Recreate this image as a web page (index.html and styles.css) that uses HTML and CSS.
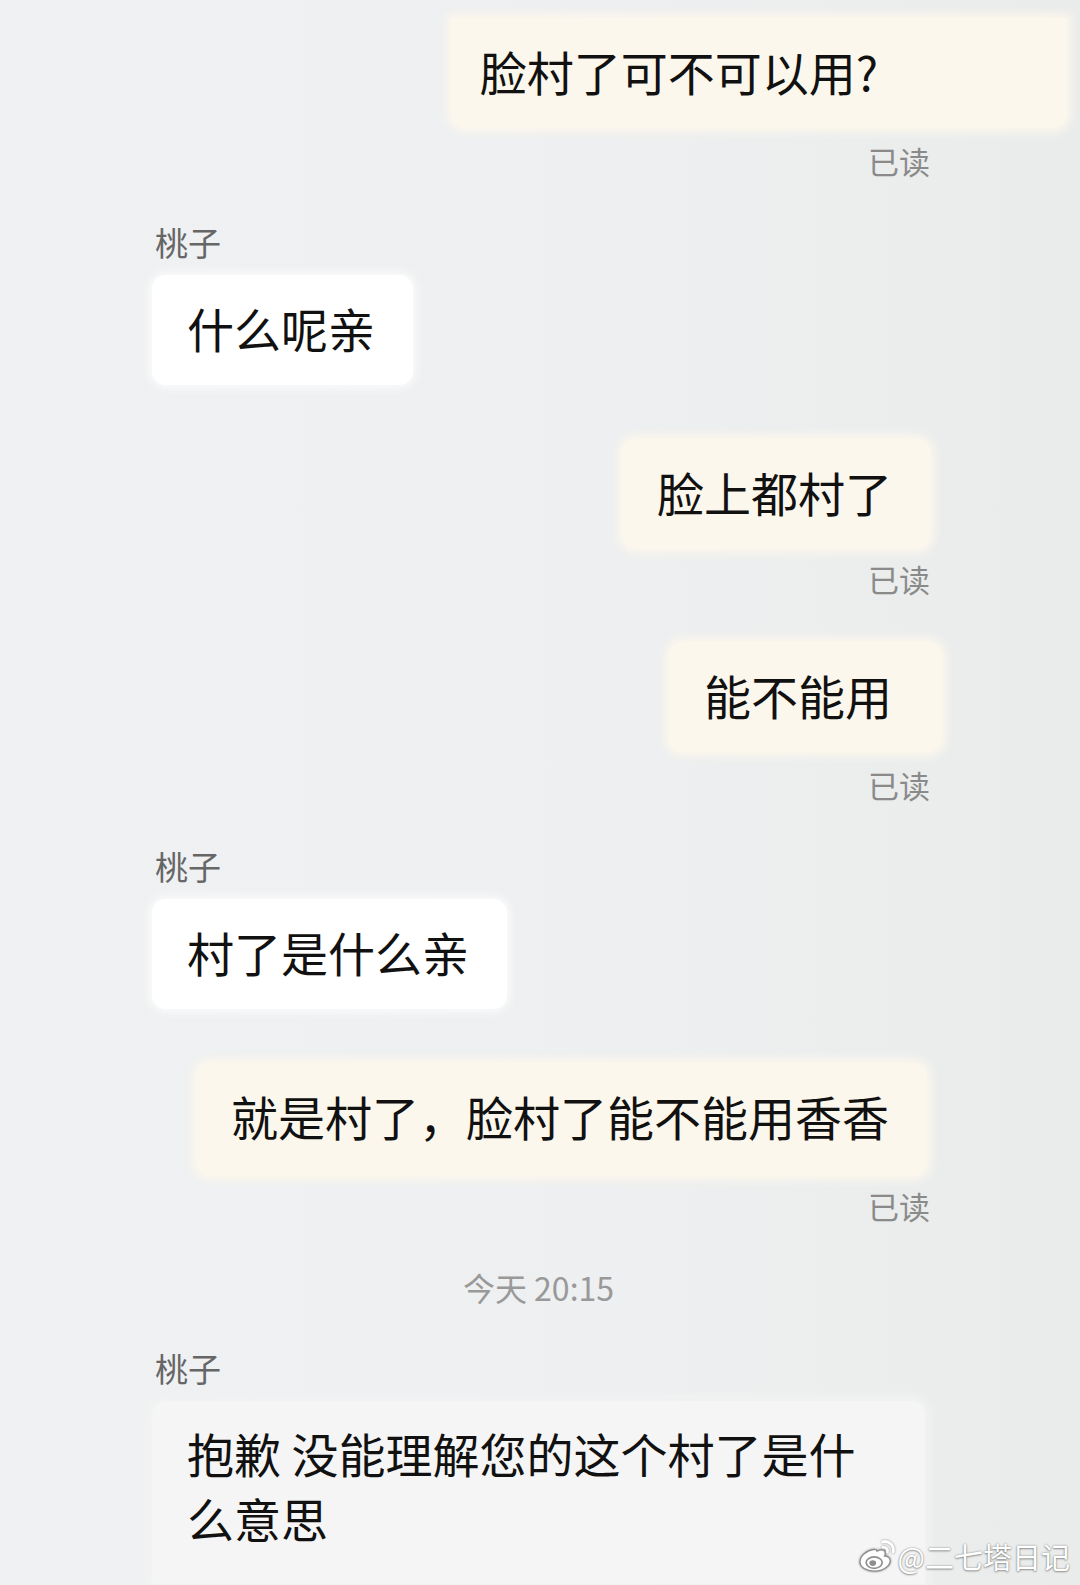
FILE: index.html
```html
<!DOCTYPE html>
<html lang="zh-CN">
<head>
  <meta charset="UTF-8">
  <meta name="viewport" content="width=device-width, initial-scale=1.0">
  <title>桃子</title>
  <link rel="stylesheet" href="styles.css">
</head>
<body>
  <div class="chat">
    <div class="row out"><div class="bubble cream first">脸村了可不可以用?</div></div>
    <div class="read gap-s">已读</div>

    <div class="name gap-l">桃子</div>
    <div class="row in gap-s"><div class="bubble white">什么呢亲</div></div>

    <div class="row out gap-xl"><div class="bubble cream">脸上都村了</div></div>
    <div class="read gap-xs">已读</div>

    <div class="row out gap-l"><div class="bubble cream wider">能不能用</div></div>
    <div class="read gap-s">已读</div>

    <div class="name gap-l">桃子</div>
    <div class="row in gap-s"><div class="bubble white">村了是什么亲</div></div>

    <div class="row out gap-xl"><div class="bubble cream tall">就是村了，脸村了能不能用香香</div></div>
    <div class="read gap-xs">已读</div>

    <div class="time gap-l">今天 20:15</div>

    <div class="name gap-l">桃子</div>
    <div class="row in gap-s"><div class="bubble grey long">抱歉 没能理解您的这个村了是什么意思</div></div>
  </div>

  <div class="watermark">
    <svg class="weibo" viewBox="0 0 40 36" width="38" height="34">
      <path d="M17 11c-8 1-15 7-15 13 0 6 7 10 15 10 10 0 17-6 17-11 0-3-3-5-6-5 1-2 1-5-1-6-2-1-5 0-7 1 0-2-1-2-3-2z" fill="#fff" stroke="#8f8f8f" stroke-width="1.4"/>
      <ellipse cx="17" cy="25" rx="8.5" ry="6" fill="#fff" stroke="#8f8f8f" stroke-width="1.8"/>
      <ellipse cx="15.5" cy="25.5" rx="3.6" ry="3" fill="#8f8f8f"/>
      <path d="M26 3a9 9 0 0 1 11 11" fill="none" stroke="#fff" stroke-width="3" stroke-linecap="round"/>
      <path d="M26 9a4 4 0 0 1 5 5" fill="none" stroke="#fff" stroke-width="2.6" stroke-linecap="round"/>
    </svg>
    <span>@二七塔日记</span>
  </div>
</body>
</html>
```

FILE: styles.css
```css
body {
  margin: 0;
  height: 1585px;
  overflow: hidden;
  position: relative;
  font-family: "Noto Sans CJK SC", "Noto Sans", sans-serif;
  background: linear-gradient(90deg, #eff1f2 0%, #edeff0 60%, #eaeceb 100%);
  color: #111;
}
.chat {
  display: flex;
  flex-direction: column;
  width: 778px;
  padding: 18px 0 0 152px;
}
.row {
  display: flex;
}
.row.out {
  justify-content: flex-end;
}
.row.in {
  justify-content: flex-start;
}
.bubble {
  font-size: 47px;
  line-height: 56px;
  padding: 25px 38px 29px 35px;
  border-radius: 14px;
  white-space: nowrap;
}
.bubble.cream {
  background: #fcf7ec;
  box-shadow: 0 0 10px 4px #fcf7ec;
}
.bubble.white {
  background: #ffffff;
  box-shadow: 0 0 8px 3px #fbfbfb;
}
.bubble.grey {
  background: #f5f5f5;
  box-shadow: 0 0 10px 4px #f3f3f3;
}
.bubble.first {
  padding-left: 29px;
  padding-right: 189px;
  margin-right: -137px;
  border-radius: 0 0 14px 14px;
}
.bubble.wider {
  padding-right: 50px;
  margin-right: -12px;
}
.bubble.tall {
  padding-top: 25px;
  padding-bottom: 32px;
  margin-right: 3px;
}
.bubble.long {
  white-space: normal;
  width: 690px;
  padding: 19px 48px 34px 35px;
  line-height: 65px;
  border-radius: 14px 14px 0 0;
}
.read {
  align-self: flex-end;
  font-size: 31px;
  line-height: 36px;
  color: #8a8a8a;
}
.name {
  font-size: 33px;
  line-height: 36px;
  color: #666;
  padding-left: 3px;
}
.time {
  align-self: center;
  margin-left: -5px;
  font-size: 32px;
  line-height: 36px;
  color: #999;
}
.gap-xs { margin-top: 12px; }
.gap-s { margin-top: 15px; }
.gap-l { margin-top: 45px; }
.gap-xl { margin-top: 54px; }
.watermark {
  position: absolute;
  right: 10px;
  bottom: 8px;
  display: flex;
  align-items: center;
  gap: 2px;
  font-size: 29px;
  color: #fff;
  text-shadow: 0 0 2px rgba(0, 0, 0, 0.45), 0 1px 2px rgba(0, 0, 0, 0.3);
}
.weibo {
  filter: drop-shadow(0 0 1px rgba(0, 0, 0, 0.45));
}
```
